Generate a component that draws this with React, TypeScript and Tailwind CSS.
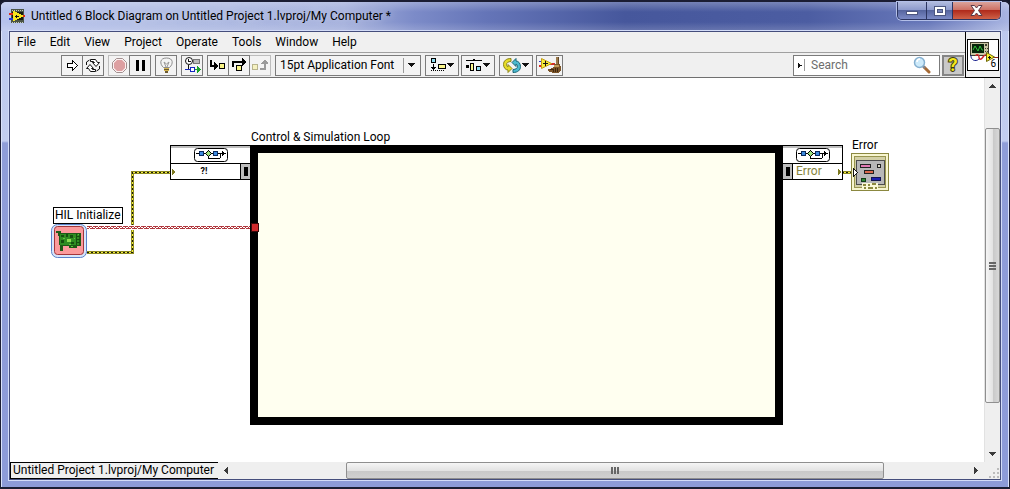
import React from 'react';
import clsx from 'clsx';

const MENUS = ['File', 'Edit', 'View', 'Project', 'Operate', 'Tools', 'Window', 'Help'];

function Icon({ w, h, children, className }: { w: number; h: number; children: React.ReactNode; className?: string }) {
  return (
    <svg width={w} height={h} viewBox={`0 0 ${w} ${h}`} shapeRendering="crispEdges" className={clsx('block shrink-0', className)} aria-hidden="true">
      {children}
    </svg>
  );
}

function ToolButton({ label, wide, joined, faded, children }: { label: string; wide?: boolean; joined?: boolean; faded?: boolean; children: React.ReactNode }) {
  return (
    <button
      type="button"
      aria-label={label}
      className={clsx(
        'h-[21px] border flex items-center justify-center gap-px shrink-0 bg-[#f3f3f3]',
        wide ? 'w-[34px]' : 'w-[22px]',
        joined && '-ml-px',
        faded ? 'border-[#bdbdbd]' : 'border-[#7b7b7b] relative'
      )}
    >
      {children}
    </button>
  );
}

function DropArrow() {
  return (
    <Icon w={7} h={4}>
      <path d="M0 0h7v1h-1v1h-1v1h-1v1h-1v-1h-1v-1h-1v-1h-1z" fill="#111" />
    </Icon>
  );
}

function AppLogo() {
  return (
    <Icon w={16} h={16}>
      <rect x="2" y="1" width="13" height="14" fill="#4b5445" />
      <path d="M3 2h1M5 2h1M7 2h1M9 2h1M11 2h1M13 2h1M3 14h1M5 14h1M7 14h1M9 14h1M11 14h1M13 14h1" stroke="#c4ccba" strokeWidth="1" transform="translate(0 .5)" />
      <rect x="3" y="4" width="11" height="8" fill="#161b12" />
      <path d="M4 3v10h2v-1h2v-1h2v-1h2v-1h2v-2h-2v-1h-2v-1h-2v-1h-2v-1z" fill="#f6e51e" />
      <path d="M6 8.500h4M7.500 7v3" stroke="#111" strokeWidth="1" />
      <path d="M0 6h4" stroke="#e02a1a" strokeWidth="2" />
      <path d="M0 11h4" stroke="#2438d8" strokeWidth="2" />
      <path d="M14 8h2" stroke="#e02a1a" strokeWidth="2" />
    </Icon>
  );
}

function LoopGlyph() {
  return (
    <Icon w={34} h={14}>
      <rect x=".5" y=".5" width="33" height="13" rx="3" fill="#fff" stroke="#000" shapeRendering="auto" />
      <path d="M2 5.500h28M14.500 6v4M14 10.500h12M26.500 6v4" stroke="#000" fill="none" />
      <rect x="5.500" y="3.500" width="4" height="4" fill="#3d8be0" stroke="#0a2a5e" />
      <path d="M14.500 2.500l3 3-3 3-3-3z" fill="#9be07c" stroke="#000" />
      <rect x="19.500" y="3.500" width="4" height="4" fill="#3d8be0" stroke="#0a2a5e" />
      <path d="M28 3h1v1h1v1h2v1h-2v1h-1v1h-1z" fill="#000" />
    </Icon>
  );
}

function Oscilloscope() {
  return (
    <Icon w={30} h={30}>
      <rect x="2.500" y="2.500" width="18" height="13" fill="#c9c5a4" stroke="#3d3b2c" />
      <rect x="4" y="4" width="12" height="9" fill="#07240a" />
      <path d="M5 10l2-4 3 5 2-5 2 4h1" fill="none" stroke="#33c13d" shapeRendering="auto" />
      <path d="M17 4h2v2h-2zM17 8h1v1h-1zM19 8h1v1h-1zM17 11h1v1h-1zM19 11h1v1h-1z" fill="#413e31" />
      <path d="M3 15v2c1 4 6 5 9 1" fill="none" stroke="#1b2390" shapeRendering="auto" />
      <path d="M8 16c0-2 3-2 3 1s2 3 4 0 3-3 5-2" fill="none" stroke="#d7202a" strokeWidth="1.400" shapeRendering="auto" />
      <path d="M25 17h5" stroke="#8a2222" />
      <path d="M18.500 12.500l8 4.500-8 4.500z" fill="#f8ef2c" stroke="#6d6708" shapeRendering="auto" />
      <path d="M20 17h3M21.500 15.500v3" stroke="#111" />
    </Icon>
  );
}

function FileTerminal() {
  return (
    <Icon w={38} h={38}>
      <rect x=".5" y=".5" width="37" height="37" fill="#f7f5cf" stroke="#8b8840" />
      <rect x="3.500" y="3.500" width="31" height="31" fill="#d3d0a6" stroke="#98954f" />
      <rect x="5.500" y="7.500" width="28" height="24" fill="#b8b8b8" stroke="#4c4c4c" />
      <rect x="9.500" y="11.500" width="10" height="3" fill="#e27bb4" stroke="#222" />
      <rect x="26.500" y="11.500" width="3" height="3" fill="#dcd9c8" stroke="#222" />
      <rect x="13.500" y="17.500" width="9" height="3" fill="#d9694d" stroke="#222" />
      <rect x="20.500" y="24.500" width="9" height="3" fill="#1a1fb0" stroke="#11134f" />
      <rect x="10.500" y="25.500" width="4" height="3" fill="#2e8a34" stroke="#123d16" />
      <path d="M11 30h16v7h-16z" fill="#fbf9d8" />
      <path d="M12 31h3v2h-3zM17 31h2v2h-2zM21 30h4v2h-4zM13 34h2v2h-2zM17 34h5v2h-5zM24 34h2v2h-2z" fill="#8d8a3e" />
      <path d="M2.500 15.500v8l4-4z" fill="#fff" stroke="#111" />
    </Icon>
  );
}

function HilBoard() {
  return (
    <Icon w={36} h={34}>
      <rect x=".5" y=".5" width="35" height="33" rx="6" fill="#d6e5fb" stroke="#5a81c9" shapeRendering="auto" />
      <rect x="3.500" y="2.500" width="29" height="28" rx="3" fill="#fb9a9c" stroke="#a3353a" shapeRendering="auto" />
      <path d="M5 7h5v2h20v13h-4v2h-8v-2h-6v5h-3v-6h-1v-9h-1v-3h-2z" fill="#1d5a16" />
      <path d="M9 10h19v11h-19z" fill="#2f8d22" />
      <path d="M10 11h3v2h-3zM15 10h2v3h-2zM19 11h3v3h-3zM10 16h3v3h-3zM20 18h3v2h-3zM25 10h1v11h-1zM26 12h3v1h-3zM26 15h3v1h-3zM26 18h3v1h-3z" fill="#155010" />
      <path d="M16 15h4v3h-4z" fill="#8ede52" />
      <path d="M12 14h2v1h-2zM18 20h2v1h-2zM23 14h1v1h-1zM27 10h1v1h-1zM20 22h2v1h-2z" fill="#5cc83c" />
    </Icon>
  );
}

function ArrowButton({ label, d }: { label: string; d: string }) {
  return (
    <button type="button" aria-label={label} className="w-[17px] h-[17px] shrink-0 flex items-center justify-center">
      <Icon w={7} h={7}>
        <path d={d} fill="#3a3a3a" />
      </Icon>
    </button>
  );
}

function Toolbar() {
  return (
    <div className="h-[25px] flex items-center gap-1 pl-[51px] pr-px border-b border-[#6f6f6f] bg-[#f0f0f0]">
      <div className="flex">
        <ToolButton label="Run">
          <Icon w={13} h={13}>
            <path d="M1.500 4.500h5v-3l5 5-5 5v-3h-5z" fill="#fff" stroke="#000" />
          </Icon>
        </ToolButton>
        <ToolButton label="Run Continuously" joined>
          <Icon w={16} h={15}>
            <path d="M5.500 1.500h5l2 3h2l-3.500 4-3.500-4h2l-1-1h-3z" fill="#fff" stroke="#111" shapeRendering="auto" />
            <path d="M10.500 13.500h-5l-2-3h-2l3.500-4 3.500 4h-2l1 1h3z" fill="#fff" stroke="#111" shapeRendering="auto" />
            <path d="M1.500 7v-3l3-2M14.500 8v3l-3 2" fill="none" stroke="#111" shapeRendering="auto" />
          </Icon>
        </ToolButton>
      </div>
      <div className="flex">
        <ToolButton label="Abort Execution" faded>
          <Icon w={15} h={15}>
            <path d="M4.500.5h6l4 4v6l-4 4h-6l-4-4v-6z" fill="#fbf1f1" stroke="#a28f8f" shapeRendering="auto" />
            <path d="M5 2h5l3 3v5l-3 3h-5l-3-3v-5z" fill="#dd9fa1" shapeRendering="auto" />
          </Icon>
        </ToolButton>
        <ToolButton label="Pause" joined>
          <Icon w={9} h={11}>
            <path d="M0 0h3v11h-3zM6 0h3v11h-3z" fill="#000" />
          </Icon>
        </ToolButton>
      </div>
      <ToolButton label="Highlight Execution">
        <Icon w={13} h={17}>
          <path d="M6.500 1c-7 0-7 6-3 9.500h6c4-3.500 4-9.500-3-9.500z" fill="#f4f4f4" stroke="#8d8d8d" shapeRendering="auto" />
          <path d="M4 5l2 5M9 5l-2 5M4 5l2.500 2 2.500-2" fill="none" stroke="#999" shapeRendering="auto" />
          <path d="M4 11h5v3h-5z" fill="#d4b44e" />
          <path d="M4 12h5v1h-5zM5 14h3v2h-3z" fill="#6c5b31" />
        </Icon>
      </ToolButton>
      <ToolButton label="Retain Wire Values">
        <Icon w={17} h={16}>
          <circle cx="5" cy="4" r="3.500" fill="#fff" stroke="#111" shapeRendering="auto" />
          <path d="M4.500 2v3M5 4.500h2M4.500 8v4" stroke="#111" />
          <rect x="9.500" y="2.500" width="6" height="4" fill="#b9b9b9" stroke="#777" />
          <path d="M1 12.500h6" stroke="#1527c2" />
          <rect x="6.500" y="10.500" width="4" height="4" fill="#fff" stroke="#1527c2" />
          <path d="M11 12.500h2" stroke="#18a32b" />
          <path d="M13 9l4 3.500-4 3.500z" fill="#18a32b" />
        </Icon>
      </ToolButton>
      <div className="flex">
        <ToolButton label="Step Into">
          <Icon w={16} h={12}>
            <path d="M1 1v6h4" fill="none" stroke="#000" strokeWidth="2" />
            <path d="M4 3h1v1h1v1h1v1h1v2h-1v1h-1v1h-1v1h-1z" fill="#000" />
            <rect x="9.500" y="4.500" width="5" height="5" fill="#f9f385" stroke="#000" />
          </Icon>
        </ToolButton>
        <ToolButton label="Step Over" joined>
          <Icon w={16} h={14}>
            <path d="M2 9v-5h9" fill="none" stroke="#000" strokeWidth="2" />
            <path d="M11 0h1v1h1v1h1v1h1v2h-1v1h-1v1h-1v1h-1z" fill="#000" />
            <rect x="5.500" y="7.500" width="5" height="5" fill="#f9f385" stroke="#000" />
          </Icon>
        </ToolButton>
        <ToolButton label="Step Out" joined faded>
          <Icon w={16} h={13}>
            <path d="M8 10h5v-6" fill="none" stroke="#9a9a9a" strokeWidth="2" />
            <path d="M9 5v-1h1v-1h1v-1h1v-1h2v1h1v1h1v2z" fill="#9a9a9a" />
            <rect x=".5" y="5.500" width="5" height="5" fill="#f5f1c0" stroke="#b8b48d" />
          </Icon>
        </ToolButton>
      </div>
      <div className="relative w-[146px] shrink-0">
        <select aria-label="Text Settings" className="appearance-none block w-full h-[21px] pl-1 pr-0 border border-[#7b7b7b] bg-[#f3f3f3] text-xs leading-4 text-black">
          <option>15pt Application Font</option>
        </select>
        <div className="absolute right-[6px] top-[3px] h-[15px] pl-1 border-l border-[#9a9a9a] flex items-center pointer-events-none">
          <DropArrow />
        </div>
      </div>
      <div className="flex gap-[2px]">
        <ToolButton label="Align Objects" wide>
          <Icon w={16} h={14}>
            <rect x="1.500" y=".5" width="4" height="4" fill="#8ddcf0" stroke="#000" />
            <path d="M3.500 6v6" stroke="#000" />
            <path d="M1 9h5v1h-1v1h-1v1h-1v-1h-1v-1h-1z" fill="#000" />
            <path d="M1 12.500h14" stroke="#000" strokeDasharray="1 1" />
            <rect x="8.500" y="6.500" width="7" height="4" fill="#fbf78c" stroke="#000" />
          </Icon>
          <DropArrow />
        </ToolButton>
        <ToolButton label="Distribute Objects" wide>
          <Icon w={16} h={14}>
            <path d="M0 3v-1h7v-1h1v1h7v1" fill="none" stroke="#000" />
            <path d="M0 7h3v3h-3z" fill="#000" />
            <rect x="4.500" y="5.500" width="3" height="7" fill="#fbf78c" stroke="#000" />
            <rect x="10.500" y="8.500" width="4" height="4" fill="#8ddcf0" stroke="#000" />
          </Icon>
          <DropArrow />
        </ToolButton>
      </div>
      <div className="flex gap-[3px]">
        <ToolButton label="Reorder" wide>
          <Icon w={18} h={15}>
            <path d="M8 .5c-5 0-7.500 2.500-7.500 6 0 3 2 5.500 4.500 5.500v2.500l4-4-4-4v2.500c-1-.5-1.500-1.500-1.500-2.500 0-1.500 1.500-3 4.500-3z" fill="#e6dc28" stroke="#8a8318" shapeRendering="auto" />
            <path d="M10 14.500c5 0 7.500-2.500 7.500-6 0-3-2-5.500-4.500-5.500v-2.500l-4 4 4 4v-2.500c1 .5 1.500 1.500 1.500 2.500 0 1.500-1.500 3-4.500 3z" fill="#4bb9d0" stroke="#1b6475" shapeRendering="auto" />
          </Icon>
          <DropArrow />
        </ToolButton>
        <button type="button" aria-label="Clean Up Diagram" className="w-[27px] h-[21px] border border-[#7b7b7b] bg-[#f3f3f3] flex items-center justify-center">
          <Icon w={22} h={17}>
            <path d="M0 4.500h3" stroke="#2b36c8" />
            <path d="M0 9h3M11 7h5" stroke="#d92a25" strokeWidth="2" />
            <path d="M17 0h3v8h-3z" fill="#9b7a4a" />
            <path d="M19 0h1v8h-1z" fill="#5f4425" />
            <path d="M15 7h6v2h1v4l-2 3h-5l-5-1-2-2 5-2 2-1z" fill="#7b5428" />
            <path d="M15 8h5v2h-5z" fill="#c39a5a" />
            <path d="M11 13l3-1 1 3M16 11v4M18 11l1 4" fill="none" stroke="#3e2710" />
            <path d="M2.500 1.500l10 5-10 5z" fill="#f8ee3a" stroke="#c29c16" shapeRendering="auto" />
            <path d="M4 6.500h5M6.500 4v5" stroke="#111" />
          </Icon>
        </button>
      </div>
      <div className="flex-1" />
      <div className="flex gap-[2px] shrink-0">
        <label className="w-[147px] h-[21px] flex items-center border border-[#7b7b7b] bg-white pl-1">
          <Icon w={4} h={5}>
            <path d="M0 0h1v1h1v1h2v1h-2v1h-1v1h-1z" fill="#111" />
          </Icon>
          <span className="h-3 ml-[2px] border-l border-[#9a9a9a]" />
          <input type="text" aria-label="Search" placeholder="Search" className="min-w-0 flex-1 px-[6px] text-xs leading-4 bg-transparent outline-none placeholder:text-[#6d6d6d]" />
          <svg width="18" height="18" viewBox="0 0 18 18" className="mr-2 shrink-0" aria-hidden="true">
            <path d="M11 11l5 5" stroke="#a66a35" strokeWidth="3" strokeLinecap="round" />
            <path d="M9.500 9.500l2.500 2.500" stroke="#78889a" strokeWidth="2" />
            <circle cx="6.500" cy="6.500" r="5" fill="#cdeafa" stroke="#86b0d0" strokeWidth="1.500" />
            <path d="M4 6c0-2 1-3 3-3" stroke="#fff" strokeWidth="1.500" fill="none" />
          </svg>
        </label>
        <button type="button" aria-label="Context Help" className="w-[22px] h-[21px] border-2 border-[#858585] bg-[#c9c9c9] flex items-center justify-center">
          <span className="font-bold text-lg leading-4 text-[#f4e81c] [-webkit-text-stroke:2px_#3c3a10] [paint-order:stroke_fill]">?</span>
        </button>
      </div>
    </div>
  );
}

function Diagram() {
  return (
    <main className="relative flex-1 min-w-0 overflow-hidden bg-white">
      {/* wires */}
      <svg width="880" height="200" viewBox="0 0 880 200" shapeRendering="crispEdges" className="absolute left-0 top-0" aria-hidden="true">
        <path d="M77 174.500h45.500v-80h38M832 94.500h11" fill="none" stroke="#8c8920" strokeWidth="3" />
        <path d="M77 174.500h45.500v-80h38M832 94.500h11" fill="none" stroke="#f5ef3c" strokeWidth="1" />
        <path d="M77 174.500h45.500v-80h38M832 94.500h11" fill="none" stroke="#1b1a10" strokeWidth="1" strokeDasharray="2 2" />
        <path d="M119 149.500h8" stroke="#fff" strokeWidth="5" />
        <path d="M77 148.500h165" stroke="#b0383e" strokeWidth="1" strokeDasharray="5 1" />
        <path d="M77 150.500h165" stroke="#b0383e" strokeWidth="1" strokeDasharray="5 1" strokeDashoffset="3" />
        <path d="M79 149.500h163" stroke="#b0383e" strokeWidth="1" strokeDasharray="1 2" />
      </svg>

      {/* hardware init node */}
      <div className="absolute left-[43px] top-[129px] min-w-[69px] h-[17px] border border-black bg-white px-px text-xs leading-[15px] whitespace-nowrap">HIL Initialize</div>
      <div className="absolute left-[41px] top-[146px]">
        <HilBoard />
      </div>

      {/* simulation loop */}
      <div className="absolute left-[241px] top-[51px] text-xs leading-4 whitespace-nowrap">Control &amp; Simulation Loop</div>
      <div className="absolute left-[240px] top-[67px] w-[533px] h-[280px] border-8 border-black bg-[#fffff0]" />
      <div className="absolute left-[241px] top-[145px] w-2 h-[9px] border border-[#3a0a0a] bg-[#cf2a2c]" />

      <div className="absolute left-[160px] top-[67px] w-[81px] h-[35px] border border-black bg-white">
        <div className="h-[18px] flex justify-center border-t-2 border-t-[#bdbdbd] border-b border-b-black">
          <LoopGlyph />
        </div>
        <div className="h-[15px] flex items-center">
          <Icon w={4} h={6} className="ml-px">
            <path d="M0 0l4 3-4 3z" fill="#7d7a20" />
          </Icon>
          <span className="flex-1 pr-2 text-center text-[9px] leading-[15px] font-bold">?!</span>
          <div className="w-[10px] h-full border-l border-black bg-[#bdbdbd] flex items-center justify-center">
            <span className="w-1 h-[9px] bg-black" />
          </div>
        </div>
      </div>

      <div className="absolute left-[773px] top-[67px] w-[60px] h-[35px] border border-l-0 border-black bg-white">
        <div className="h-[18px] flex justify-center border-t-2 border-t-[#bdbdbd] border-b border-b-black">
          <LoopGlyph />
        </div>
        <div className="h-[15px] flex items-center">
          <div className="w-[10px] h-full border-r border-black bg-[#bdbdbd] flex items-center justify-center">
            <span className="w-1 h-[9px] bg-black" />
          </div>
          <span className="flex-1 pl-[3px] text-xs leading-[15px] text-[#86833c]">Error</span>
          <Icon w={4} h={6}>
            <path d="M0 0l4 3-4 3z" fill="#7d7a20" />
          </Icon>
        </div>
      </div>

      <div className="absolute left-[842px] top-[59px] text-xs leading-4">Error</div>
      <div className="absolute left-[841px] top-[75px]">
        <FileTerminal />
      </div>
    </main>
  );
}

export default function App() {
  return (
    <div className="min-h-screen bg-[#15182a] font-[Roboto,'Open_Sans',sans-serif] text-xs text-black select-none">
      <div className="min-h-screen flex flex-col rounded-t-md border border-t-2 border-b-2 border-[#1b1d33] bg-[linear-gradient(180deg,#bcc8ee_0px,#c2cdf0_139px,#8f9dd8_141px,#8d9bd8_100%)] px-2 pb-[7px] shadow-[inset_1px_0_0_#dbe3fa,inset_-1px_0_0_#dbe3fa]">
        <header className="-mx-2 h-[29px] flex items-start px-2 rounded-t-md bg-[linear-gradient(180deg,rgba(255,255,255,0.25)_0px,rgba(255,255,255,0)_10px,rgba(255,255,255,0)_20px,rgba(255,255,255,0.18)_29px),linear-gradient(90deg,#b6c2ec_0%,#b0bce4_15%,#a3afdc_34%,#7c8bc8_41%,#6575b8_48%,#46579c_62%,#4c5da2_80%,#6878ba_92%,#a9b5e2_100%)]">
          <div className="flex items-center gap-[6px] h-[27px]">
            <AppLogo />
            <h1 className="text-xs leading-4 whitespace-nowrap [text-shadow:0_0_8px_#ffffffb0]">Untitled 6 Block Diagram on Untitled Project 1.lvproj/My Computer *</h1>
          </div>
          <div className="ml-auto flex h-[18px] rounded-b-[5px] border border-t-0 border-[#2c3561] overflow-hidden shadow-[0_0_0_1px_#b3bfe8]">
            <button type="button" aria-label="Minimize" className="w-[29px] flex items-center justify-center border-r border-[#2c3561] bg-[linear-gradient(#b1bbdf_0%,#8c99cc_48%,#56659f_50%,#7c8bc6_100%)]">
              <Icon w={12} h={10}>
                <rect x=".5" y="5.500" width="11" height="3" fill="#fff" stroke="#4c5680" />
              </Icon>
            </button>
            <button type="button" aria-label="Maximize" className="w-[26px] flex items-center justify-center border-r border-[#2c3561] bg-[linear-gradient(#b1bbdf_0%,#8c99cc_48%,#56659f_50%,#7c8bc6_100%)]">
              <Icon w={12} h={10}>
                <rect x=".5" y=".5" width="11" height="9" fill="#fff" stroke="#4c5680" />
                <rect x="3.500" y="3.500" width="5" height="3" fill="#7583b8" stroke="#4c5680" />
              </Icon>
            </button>
            <button type="button" aria-label="Close" className="w-[47px] flex items-center justify-center bg-[linear-gradient(#dba49b_0%,#cd6f62_48%,#b02b1c_50%,#cf6248_100%)]">
              <svg width="13" height="11" viewBox="0 0 13 11" aria-hidden="true">
                <path d="M1 .5h3.500l2 2.500 2-2.500h3.500l-3.500 5 3.500 5h-3.500l-2-2.500-2 2.500h-3.500l3.500-5z" fill="#fff" stroke="#5a3a48" />
              </svg>
            </button>
          </div>
        </header>

        <div className="flex-1 flex flex-col border border-[#454e7c] shadow-[0_0_0_1px_#d3dcf8] bg-white">
          <div className="flex">
            <div className="flex-1 min-w-0">
              <nav className="h-[21px] flex items-center bg-[#f0f0f0] border-b border-[#a0a0a0]">
                {MENUS.map((menu) => (
                  <button key={menu} type="button" className="px-[7px] text-xs leading-4">
                    {menu}
                  </button>
                ))}
              </nav>
              <Toolbar />
            </div>
            <div className="w-[35px] shrink-0 border-l border-b border-black bg-[#f0f0f0] flex items-center justify-center">
              <div className="relative w-8 h-8 border border-black bg-white">
                <Oscilloscope />
                <span className="absolute right-[2px] bottom-px text-[10px] leading-[10px]">6</span>
              </div>
            </div>
          </div>

          <div className="flex-1 flex">
            <Diagram />
            <div role="scrollbar" aria-label="Vertical" aria-orientation="vertical" aria-controls="root" aria-valuenow={45} className="w-[16px] shrink-0 flex flex-col items-center bg-[#efefef] border-l border-[#e2e2e2]">
              <ArrowButton label="Scroll Up" d="M3 1h1v1h1v1h1v1h1v1h-7v-1h1v-1h1v-1h1z" />
              <div className="grow-[34]" />
              <div className="grow-[273] w-full flex flex-col items-center justify-center gap-px rounded-[2px] border border-[#8f8f8f] bg-[linear-gradient(90deg,#f5f5f5,#e3e3e3_50%,#c9c9c9_55%,#d8d8d8)]">
                <span className="w-[7px] h-[2px] bg-[#666]" />
                <span className="w-[7px] h-[2px] bg-[#666]" />
                <span className="w-[7px] h-[2px] bg-[#666]" />
              </div>
              <div className="grow-[43]" />
              <ArrowButton label="Scroll Down" d="M0 2h7v1h-1v1h-1v1h-1v1h-1v-1h-1v-1h-1v-1h-1z" />
            </div>
          </div>

          <footer className="h-[17px] flex bg-[#efefef]">
            <div className="w-[208px] shrink-0 border border-r-0 border-black pl-[2px] text-xs leading-[15px] whitespace-nowrap">Untitled Project 1.lvproj/My Computer</div>
            <div role="scrollbar" aria-label="Horizontal" aria-orientation="horizontal" aria-controls="root" aria-valuenow={50} className="flex-1 flex">
              <ArrowButton label="Scroll Left" d="M5 0v7h-1v-1h-1v-1h-1v-1h-1v-1h1v-1h1v-1h1v-1z" />
              <div className="grow-[113]" />
              <div className="grow-[535] flex items-center justify-center gap-px rounded-[2px] border border-[#8f8f8f] bg-[linear-gradient(#f5f5f5,#e3e3e3_50%,#c9c9c9_55%,#d0d0d0)]">
                <span className="w-[2px] h-[7px] bg-[#666]" />
                <span className="w-[2px] h-[7px] bg-[#666]" />
                <span className="w-[2px] h-[7px] bg-[#666]" />
              </div>
              <div className="grow-[84]" />
              <ArrowButton label="Scroll Right" d="M2 0h1v1h1v1h1v1h1v1h-1v1h-1v1h-1v1h-1z" />
            </div>
            <div className="w-[16px] flex items-end justify-end">
              <Icon w={11} h={11}>
                <path d="M8 0h2v2h-2zM8 4h2v2h-2zM8 8h2v2h-2zM4 4h2v2h-2zM4 8h2v2h-2zM0 8h2v2h-2z" fill="#bcbcbc" />
              </Icon>
            </div>
          </footer>
        </div>
      </div>
    </div>
  );
}
